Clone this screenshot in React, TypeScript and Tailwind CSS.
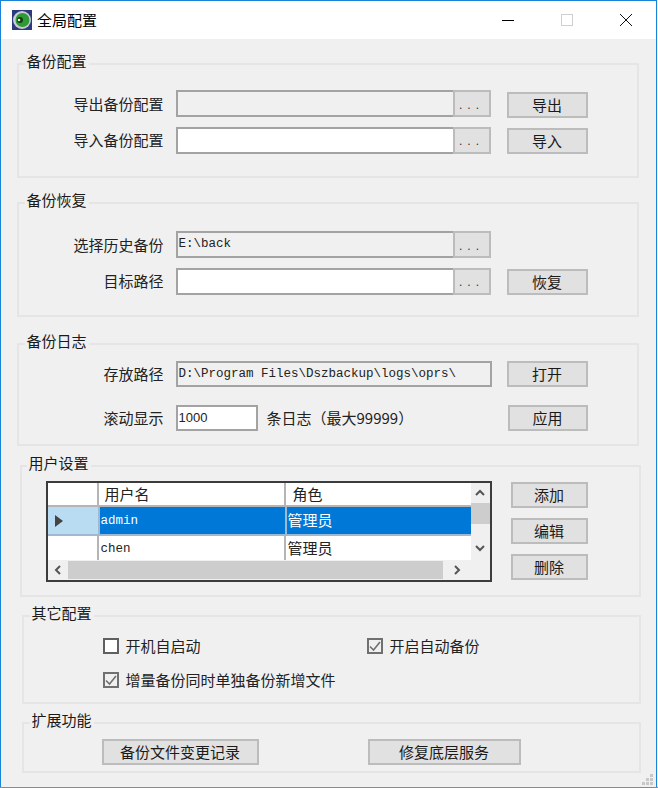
import type { ReactNode } from "react";

const cjk = "font-['Noto_Sans_CJK_SC','Liberation_Sans',sans-serif]";
const mono = "font-['Liberation_Mono','Noto_Sans_CJK_SC',monospace]";

function Group({
  title,
  className,
  legendClass = "left-[6px]",
  children,
}: {
  title: string;
  className: string;
  legendClass?: string;
  children: ReactNode;
}) {
  return (
    <div className={`relative border-2 border-[#e5e5e5] ${className}`}>
      <span className={`absolute top-[-14px] bg-[#f0f0f0] px-0.5 text-[15px] leading-[20px] text-[#1a1a1a] ${legendClass}`}>
        {title}
      </span>
      {children}
    </div>
  );
}

function Btn({ children, className = "w-[81px]" }: { children: ReactNode; className?: string }) {
  return (
    <button className={`h-[26px] border-2 border-[#bcbcbc] bg-[#e1e1e1] text-[15px] leading-[20px] text-[#1a1a1a] ${className}`}>
      {children}
    </button>
  );
}

function Label({ children }: { children: ReactNode }) {
  return <span className="w-[145px] shrink-0 text-right text-[15px] leading-[20px] text-[#222]">{children}</span>;
}

function PathField({ value, disabled }: { value?: string; disabled?: boolean }) {
  return (
    <div className="flex">
      <div
        className={`flex h-[27px] w-[277px] items-center border-2 border-r-0 border-[#a3a3a3] pl-[1px] ${mono} text-[12.5px] text-[#222] ${
          disabled || value ? "bg-[#f0f0f0]" : "bg-white"
        }`}
      >
        {value}
      </div>
      <div className="flex h-[27px] w-[38px] items-center justify-center border-2 border-[#bcbcbc] bg-[#e1e1e1] pt-[2px] font-['Liberation_Sans',sans-serif] text-[12px] leading-none tracking-[5px] text-[#333]">
        ...
      </div>
    </div>
  );
}

function Check({ checked }: { checked?: boolean }) {
  return (
    <span className={`flex h-[16px] w-[16px] shrink-0 items-center justify-center border-2 ${checked ? "border-[#707070] bg-[#f0f0f0]" : "border-[#606060] bg-white"}`}>
      {checked && (
        <svg viewBox="0 0 12 12" className="h-[12px] w-[12px]">
          <path d="M1 6.5 L4.5 10 L11 2" fill="none" stroke="#707070" strokeWidth="1.6" />
        </svg>
      )}
    </span>
  );
}

function Chevron({ d }: { d: string }) {
  return (
    <svg viewBox="0 0 10 10" className="h-[10px] w-[10px]">
      <path d={d} fill="none" stroke="#555" strokeWidth="2" />
    </svg>
  );
}

function UserTable() {
  return (
    <div className="flex h-[101px] w-[446px] border-2 border-[#3c3c3c] bg-[#f0f0f0]">
      <div className="flex w-[423px] flex-col">
        <div className="flex-1 bg-white">
          <div className="flex h-[24px] border-b-2 border-[#b5b5b5] text-[15px] leading-[22px] text-[#222]">
            <div className="w-[51px] border-r-2 border-[#b5b5b5]" />
            <div className="w-[187px] border-r-2 border-[#b5b5b5] pl-[6px]">用户名</div>
            <div className="flex-1 pl-[7px]">角色</div>
          </div>
          <div className="flex h-[29px] border-b-2 border-[#9fb9d3] text-white">
            <div className="flex w-[50px] items-center justify-start bg-[#badcf3] pl-[7px]">
              <svg viewBox="0 0 8 12" className="h-[12px] w-[8px]">
                <path d="M0 0 L8 6 L0 12 Z" fill="#444" />
              </svg>
            </div>
            <div className={`flex w-[187px] items-center border-l-2 border-[#9fb9d3] bg-[#0078d7] pl-[1px] pt-[2px] ${mono} text-[12.5px]`}>admin</div>
            <div className="flex flex-1 items-center border-l-2 border-[#9fb9d3] bg-[#0078d7] pl-[1px] text-[15px]">管理员</div>
          </div>
          <div className="flex h-[24px] text-[#222]">
            <div className="w-[51px] border-r-2 border-[#b5b5b5]" />
            <div className={`flex w-[187px] items-center border-r-2 border-[#b5b5b5] pl-[2px] pt-[2px] ${mono} text-[12.5px]`}>chen</div>
            <div className="flex flex-1 items-center pl-[2px] text-[15px]">管理员</div>
          </div>
        </div>
        <div className="flex h-[20px] items-center">
          <div className="flex w-[20px] justify-center">
            <Chevron d="M7 1 L3 5 L7 9" />
          </div>
          <div className="h-[18px] w-[375px] bg-[#cdcdcd]" />
          <div className="flex w-[28px] justify-center">
            <Chevron d="M3 1 L7 5 L3 9" />
          </div>
        </div>
      </div>
      <div className="flex flex-1 flex-col items-center">
        <div className="flex h-[20px] items-center">
          <Chevron d="M1 7 L5 3 L9 7" />
        </div>
        <div className="h-[21px] w-full bg-[#cdcdcd]" />
        <div className="mt-[14px] flex h-[20px] items-center">
          <Chevron d="M1 3 L5 7 L9 3" />
        </div>
      </div>
    </div>
  );
}

export default function App() {
  return (
    <div className={`relative h-[788px] w-[658px] overflow-hidden bg-[#f0f0f0] ${cjk}`}>
      <div className="flex h-full w-[657px] flex-col border-x-[1.5px] border-t border-x-[#1883d7] border-t-[#1883d7]">
        {/* Title bar */}
        <div className="flex h-[38px] shrink-0 items-center bg-white">
          <svg viewBox="0 0 20 20" className="ml-[11px] h-[20px] w-[20px]">
            <rect width="20" height="20" fill="#2b3a7c" />
            <circle cx="10" cy="10" r="9" fill="#c7ccd6" />
            <circle cx="10.5" cy="10" r="7" fill="#2f9a35" />
            <circle cx="8" cy="10" r="3" fill="#0f3d12" />
            <circle cx="7" cy="10" r="1.3" fill="#d9ecd0" />
          </svg>
          <span className="ml-[5px] text-[15px] leading-[20px] text-black">全局配置</span>
          <div className="ml-auto flex items-center">
            <div className="h-[1px] w-[12px] bg-black" />
            <div className="ml-[47px] h-[12px] w-[12px] border border-[#cfcfcf]" />
            <svg viewBox="0 0 12 12" className="ml-[47px] mr-[24px] h-[12px] w-[12px]">
              <path d="M0 0 L12 12 M12 0 L0 12" stroke="#111" strokeWidth="1" />
            </svg>
          </div>
        </div>

        {/* Body */}
        <div className="flex flex-1 flex-col">
          <Group title="备份配置" className="ml-[15.5px] mt-[24px] h-[115px] w-[622px]">
            <div className="flex flex-col gap-[8px] pt-[24px]">
              <div className="flex items-center gap-[12px]">
                <Label>导出备份配置</Label>
                <PathField disabled />
                <div className="ml-[4px] mt-[3px] flex">
                  <Btn>导出</Btn>
                </div>
              </div>
              <div className="flex items-center gap-[12px]">
                <Label>导入备份配置</Label>
                <PathField />
                <div className="ml-[4px] mt-[2px] flex">
                  <Btn>导入</Btn>
                </div>
              </div>
            </div>
          </Group>

          <Group title="备份恢复" className="ml-[15.5px] mt-[24px] h-[115px] w-[622px]">
            <div className="flex flex-col gap-[9px] pt-[27px]">
              <div className="flex items-center gap-[12px]">
                <Label>选择历史备份</Label>
                <PathField value="E:\back" />
              </div>
              <div className="flex items-center gap-[12px]">
                <Label>目标路径</Label>
                <PathField />
                <div className="ml-[4px] mt-[2px] flex">
                  <Btn>恢复</Btn>
                </div>
              </div>
            </div>
          </Group>

          <Group title="备份日志" className="ml-[15.5px] mt-[26px] h-[103px] w-[622px]">
            <div className="flex flex-col gap-[18px] pt-[16px]">
              <div className="flex items-center gap-[12px]">
                <Label>存放路径</Label>
                <div className={`flex h-[26px] w-[316px] items-center border-2 border-[#a3a3a3] pl-[1px] ${mono} text-[12.5px] text-[#222]`}>
                  {"D:\\Program Files\\Dszbackup\\logs\\oprs\\"}
                </div>
                <div className="ml-[3px] flex">
                  <Btn>打开</Btn>
                </div>
              </div>
              <div className="flex items-center gap-[12px]">
                <Label>滚动显示</Label>
                <div className="flex h-[26px] w-[82px] items-center border-2 border-[#a3a3a3] bg-white pl-[1px] font-['Liberation_Sans',sans-serif] text-[13px] text-[#222]">
                  1000
                </div>
                <span className="-ml-[3px] w-[229px] text-[15px] leading-[20px] text-[#222]">条日志（最大99999）</span>
                <div className="flex">
                  <Btn className="w-[80px]">应用</Btn>
                </div>
              </div>
            </div>
          </Group>

          <Group title="用户设置" legendClass="left-[5px]" className="ml-[18.5px] mt-[19px] h-[132px] w-[621px]">
            <div className="flex pl-[24px] pt-[14px]">
              <UserTable />
              <div className="ml-[19px] mt-[1px] flex flex-col gap-[10px]">
                <Btn className="w-[77px]">添加</Btn>
                <Btn className="w-[77px]">编辑</Btn>
                <Btn className="w-[77px]">删除</Btn>
              </div>
            </div>
          </Group>

          <Group title="其它配置" className="ml-[20.5px] mt-[18px] h-[89px] w-[619px]">
            <div className="grid grid-cols-[264px_1fr] gap-y-[12px] pl-[79px] pt-[18px] text-[15px] leading-[22px] text-[#222]">
              <label className="flex items-center gap-[7px]">
                <Check />
                开机自启动
              </label>
              <label className="flex items-center gap-[7px]">
                <Check checked />
                开启自动备份
              </label>
              <label className="col-span-2 flex items-center gap-[7px]">
                <Check checked />
                增量备份同时单独备份新增文件
              </label>
            </div>
          </Group>

          <Group title="扩展功能" className="ml-[20.5px] mt-[18px] h-[51px] w-[619px]">
            <div className="flex pl-[78px] pt-[15px]">
              <Btn className="w-[157px]">备份文件变更记录</Btn>
              <Btn className="ml-[109px] w-[153px]">修复底层服务</Btn>
            </div>
          </Group>
        </div>
      </div>
      {/* resize grip */}
      <svg viewBox="0 0 12 12" className="absolute bottom-[2px] right-[4px] h-[12px] w-[12px]">
        <path d="M8 0h3v3H8z M4 4h3v3H4z M8 4h3v3H8z M0 8h3v3H0z M4 8h3v3H4z M8 8h3v3H8z" fill="#c8c8c8" />
      </svg>
      <div className="absolute bottom-0 left-0 h-[1px] w-full bg-[#8a8a8a]" />
    </div>
  );
}
